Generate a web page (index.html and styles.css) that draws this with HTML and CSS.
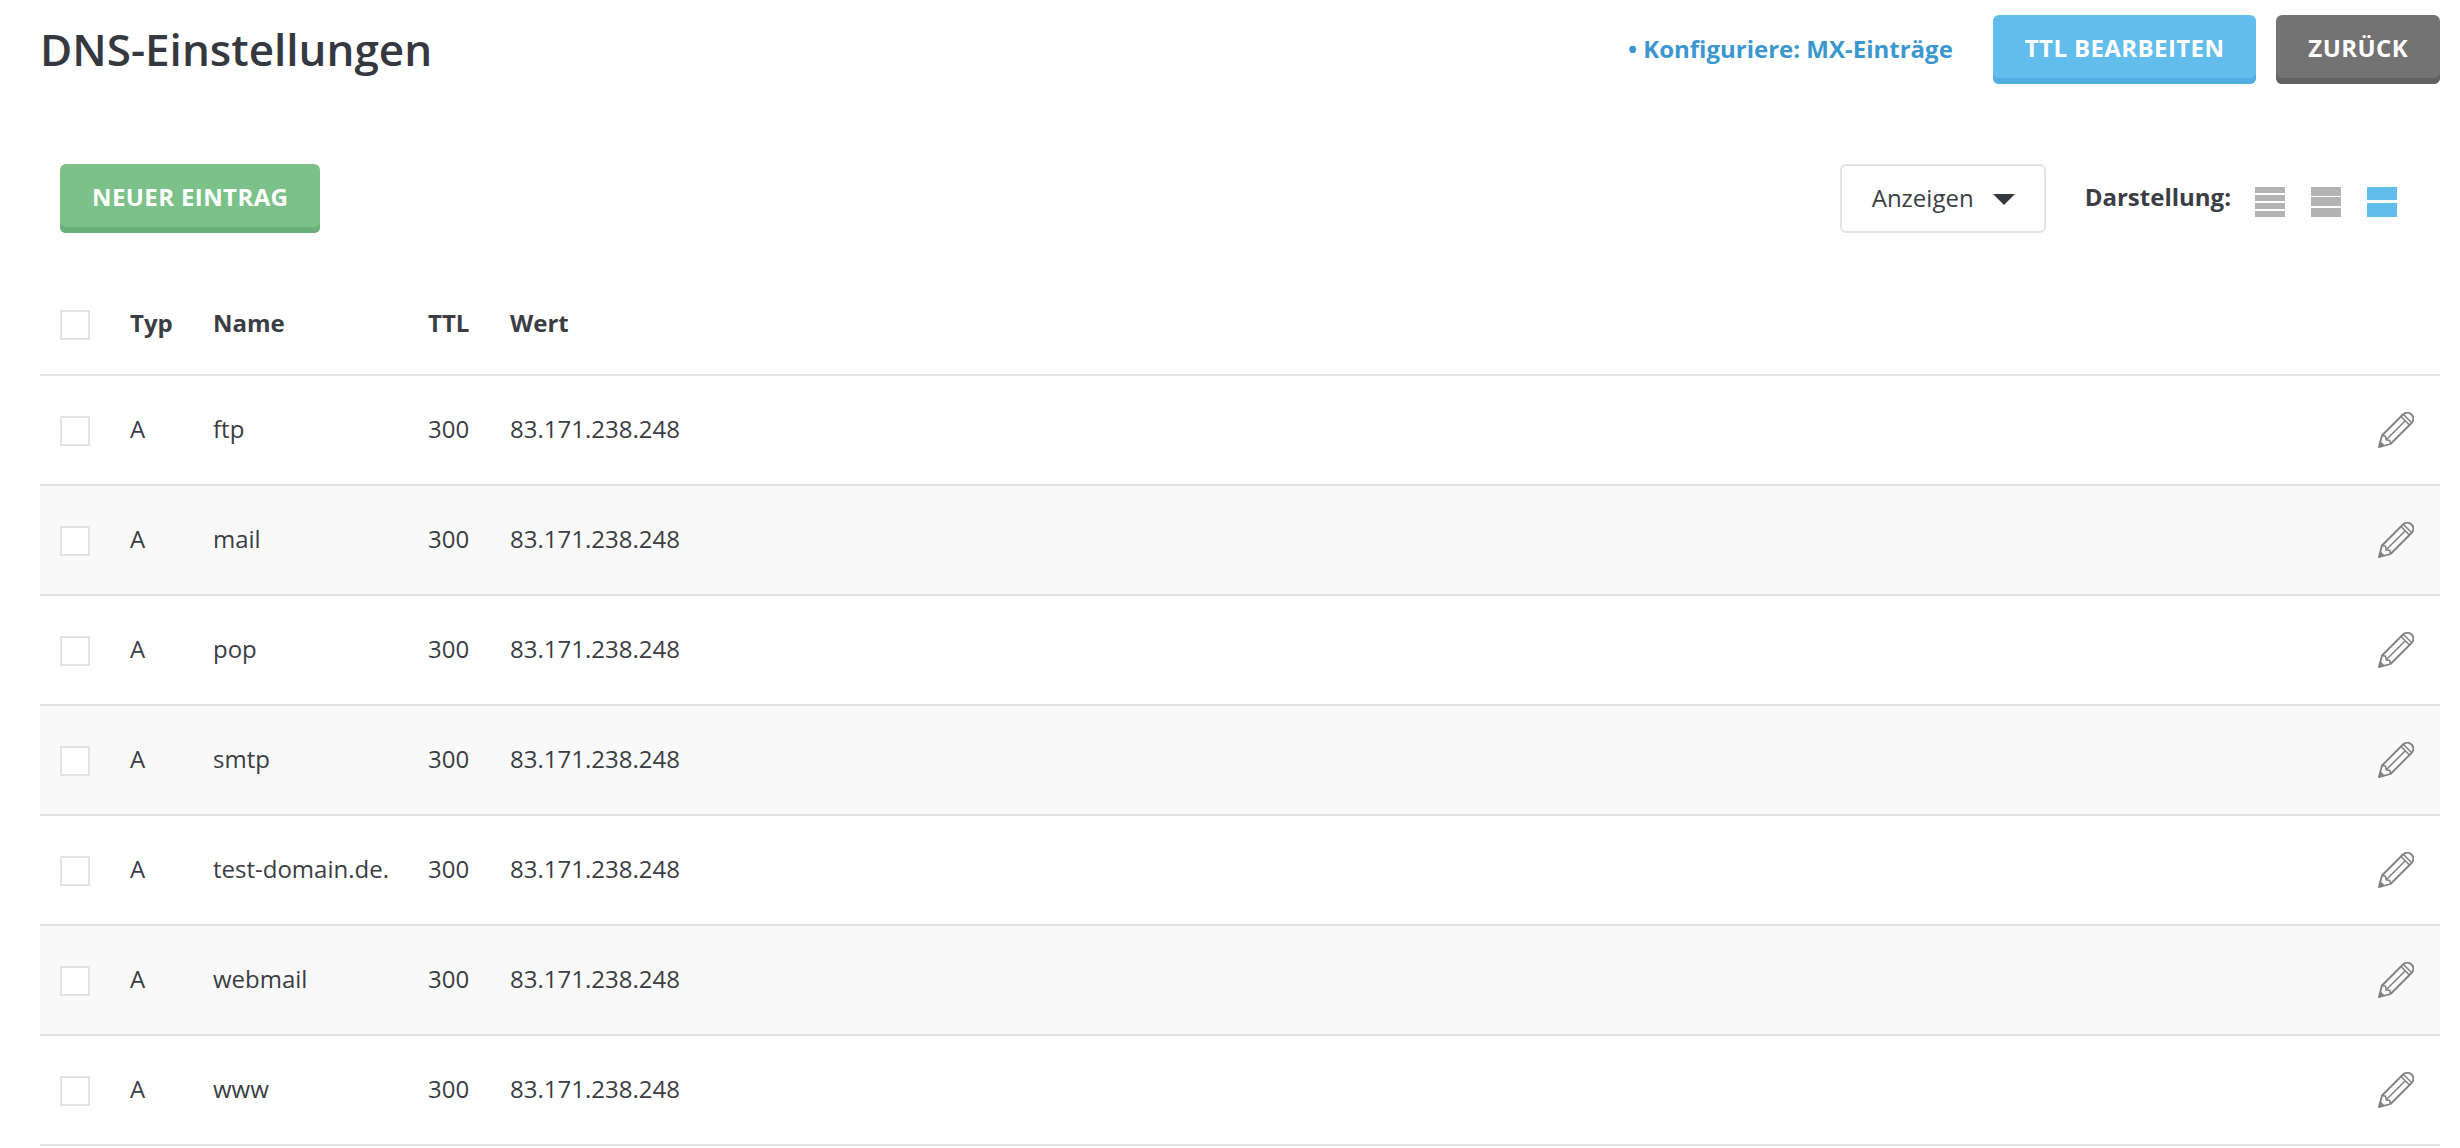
FILE: index.html
```html
<!DOCTYPE html>
<html lang="de">
  <head>
    <meta charset="UTF-8" />
    <title>DNS-Einstellungen</title>
    <link rel="stylesheet" href="styles.css">
  </head>
  <body>
    <svg class="sprite" width="0" height="0">
      <symbol id="pencil" viewBox="0 0 36 36">
        <path d="M0.9 35.1 L4 23.5 L24.5 3 C27.5 0 31 0 33.5 2.5 C36 5 36 8.5 33 11.5 L12.5 32 Z" fill="none" stroke="#808080" stroke-width="1.8" stroke-linejoin="round" />
        <path d="M4 23.5 L7.5 24.2 L8.2 27.8 L11.8 28.5 L12.5 32 M8.2 27.8 L27.8 8.2 M23 4.5 L31.5 13 M25.5 2.5 L33.5 10.5" fill="none" stroke="#808080" stroke-width="1.5" />
        <path d="M0.9 35.1 L2.4 29.2 L6.8 33.6 Z" fill="#808080" />
      </symbol>
    </svg>

    <header class="page-head">
      <h1>DNS-Einstellungen</h1>
      <div class="head-actions">
        <a href="#" class="mx-link">• Konfiguriere: MX-Einträge</a>
        <a href="#" class="btn btn-blue">TTL bearbeiten</a>
        <a href="#" class="btn btn-gray">Zurück</a>
      </div>
    </header>

    <div class="toolbar">
      <a href="#" class="btn btn-green">Neuer Eintrag</a>
      <div class="toolbar-right">
        <div class="dropdown">Anzeigen <span class="caret"></span></div>
        <span class="view-label">Darstellung:</span>
        <div class="view-icons">
          <span class="view-icon view-4"><i></i><i></i><i></i><i></i></span>
          <span class="view-icon view-3"><i></i><i></i><i></i></span>
          <span class="view-icon view-2 active"><i></i><i></i></span>
        </div>
      </div>
    </div>

    <table class="dns-table">
      <thead>
        <tr>
          <th class="col-check"><span class="check"></span></th>
          <th class="col-type">Typ</th>
          <th class="col-name">Name</th>
          <th class="col-ttl">TTL</th>
          <th>Wert</th>
          <th class="col-edit"></th>
        </tr>
      </thead>
      <tbody>
        <tr>
          <td><span class="check"></span></td><td>A</td><td>ftp</td><td>300</td><td>83.171.238.248</td>
          <td class="col-edit"><svg class="pencil"><use href="#pencil" /></svg></td>
        </tr>
        <tr>
          <td><span class="check"></span></td><td>A</td><td>mail</td><td>300</td><td>83.171.238.248</td>
          <td class="col-edit"><svg class="pencil"><use href="#pencil" /></svg></td>
        </tr>
        <tr>
          <td><span class="check"></span></td><td>A</td><td>pop</td><td>300</td><td>83.171.238.248</td>
          <td class="col-edit"><svg class="pencil"><use href="#pencil" /></svg></td>
        </tr>
        <tr>
          <td><span class="check"></span></td><td>A</td><td>smtp</td><td>300</td><td>83.171.238.248</td>
          <td class="col-edit"><svg class="pencil"><use href="#pencil" /></svg></td>
        </tr>
        <tr>
          <td><span class="check"></span></td><td>A</td><td>test-domain.de.</td><td>300</td><td>83.171.238.248</td>
          <td class="col-edit"><svg class="pencil"><use href="#pencil" /></svg></td>
        </tr>
        <tr>
          <td><span class="check"></span></td><td>A</td><td>webmail</td><td>300</td><td>83.171.238.248</td>
          <td class="col-edit"><svg class="pencil"><use href="#pencil" /></svg></td>
        </tr>
        <tr>
          <td><span class="check"></span></td><td>A</td><td>www</td><td>300</td><td>83.171.238.248</td>
          <td class="col-edit"><svg class="pencil"><use href="#pencil" /></svg></td>
        </tr>
      </tbody>
    </table>
  </body>
</html>
```

FILE: styles.css
```css
body {
  margin: 0;
  padding: 0 20px 0 40px;
  font-family: "Open Sans", sans-serif;
  font-size: 24px;
  color: #3a3d44;
  background-color: #fff;
  height: 1148px;
  box-sizing: border-box;
  overflow: hidden;
}

.sprite {
  position: absolute;
}

/* Page header */
.page-head {
  display: flex;
  align-items: flex-start;
  justify-content: space-between;
  padding-top: 15px;
}

.page-head h1 {
  margin: 0;
  font-size: 44px;
  font-weight: 600;
  line-height: 68px;
  color: #35383f;
}

.head-actions {
  display: flex;
  align-items: center;
  gap: 20px;
}

.mx-link {
  margin: -3px 20px 0 0;
  color: #3d97cf;
  font-weight: 700;
  text-decoration: none;
}

/* Buttons */
.btn {
  display: block;
  height: 69px;
  line-height: 66px;
  padding: 0 32px;
  border-radius: 6px;
  color: #fff;
  font-weight: 700;
  text-transform: uppercase;
  text-decoration: none;
  letter-spacing: 0.4px;
  box-sizing: border-box;
}

.btn-blue {
  background-color: #62bdec;
  box-shadow: inset 0 -6px 0 #50aee4;
}

.btn-gray {
  background-color: #737373;
  box-shadow: inset 0 -6px 0 #626262;
}

.btn-green {
  background-color: #7cc08a;
  box-shadow: inset 0 -6px 0 #67b078;
}

/* Toolbar */
.toolbar {
  display: flex;
  align-items: center;
  justify-content: space-between;
  margin-top: 80px;
  padding: 0 43px 0 20px;
}

.toolbar-right {
  display: flex;
  align-items: center;
}

.dropdown {
  display: flex;
  align-items: center;
  justify-content: space-between;
  width: 206px;
  height: 69px;
  padding: 0 29px 3px 30px;
  border: 2px solid #e3e3e3;
  border-radius: 6px;
  box-sizing: border-box;
}

.caret {
  margin-top: 5px;
  border-left: 11px solid transparent;
  border-right: 11px solid transparent;
  border-top: 11px solid #35383f;
}

.view-label {
  margin: -4px 0 0 39px;
  font-weight: 700;
}

.view-icons {
  display: flex;
  gap: 26px;
  margin: 6px 0 0 24px;
}

.view-icon {
  display: flex;
  flex-direction: column;
  justify-content: space-between;
  width: 30px;
  height: 30px;
}

.view-icon i {
  display: block;
  background-color: #b3b3b3;
}

.view-4 i {
  height: 6px;
}

.view-3 i {
  height: 9px;
}

.view-2 i {
  height: 13.5px;
}

.view-icon.active i {
  background-color: #62bdec;
}

/* DNS table */
.dns-table {
  width: 100%;
  margin-top: 37px;
  border-collapse: collapse;
  table-layout: fixed;
}

.dns-table th,
.dns-table td {
  text-align: left;
  border-bottom: 2px solid #e3e3e3;
}

.dns-table th {
  height: 103px;
  padding: 1px 0 0;
  font-weight: 700;
}

.dns-table td {
  height: 105px;
  padding: 0 0 3px;
}

.dns-table tbody tr:nth-child(even) {
  background-color: #f9f9f9;
}

.col-check {
  width: 90px;
}

.col-type {
  width: 83px;
}

.col-name {
  width: 215px;
}

.col-ttl {
  width: 82px;
}

.col-edit {
  width: 100px;
}

.check {
  display: block;
  width: 30px;
  height: 30px;
  margin: 5px 0 0 20px;
  border: 2px solid #e3e3e3;
  background-color: #fff;
  box-sizing: border-box;
}

.pencil {
  display: block;
  width: 36px;
  height: 36px;
  margin: 3px 0 0 38px;
}
```
